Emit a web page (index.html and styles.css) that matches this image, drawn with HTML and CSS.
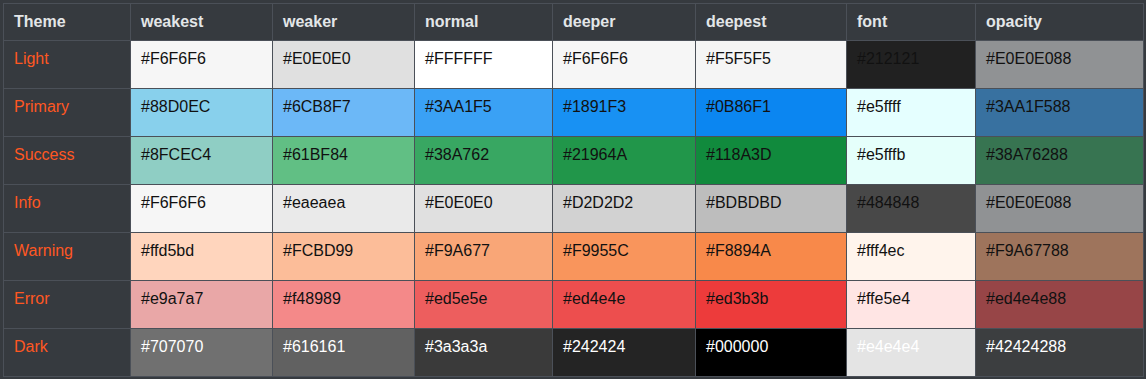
FILE: index.html
```html
<!DOCTYPE html>
<html>
<head>
<meta charset="utf-8">
<link rel="stylesheet" href="styles.css">
</head>
<body>
<div class="wrap">
<table class="palette">
  <colgroup>
    <col class="c-theme"><col class="c-weakest"><col class="c-weaker"><col class="c-normal"><col class="c-deeper"><col class="c-deepest"><col class="c-font"><col class="c-opacity">
  </colgroup>
  <thead>
    <tr><th>Theme</th><th>weakest</th><th>weaker</th><th>normal</th><th>deeper</th><th>deepest</th><th>font</th><th>opacity</th></tr>
  </thead>
  <tbody>
    <tr>
      <td class="name">Light</td>
      <td style="background:#F6F6F6">#F6F6F6</td>
      <td style="background:#E0E0E0">#E0E0E0</td>
      <td style="background:#FFFFFF">#FFFFFF</td>
      <td style="background:#F6F6F6">#F6F6F6</td>
      <td style="background:#F5F5F5">#F5F5F5</td>
      <td style="background:#212121">#212121</td>
      <td style="background:#E0E0E088">#E0E0E088</td>
    </tr>
    <tr>
      <td class="name">Primary</td>
      <td style="background:#88D0EC">#88D0EC</td>
      <td style="background:#6CB8F7">#6CB8F7</td>
      <td style="background:#3AA1F5">#3AA1F5</td>
      <td style="background:#1891F3">#1891F3</td>
      <td style="background:#0B86F1">#0B86F1</td>
      <td style="background:#e5ffff">#e5ffff</td>
      <td style="background:#3AA1F588">#3AA1F588</td>
    </tr>
    <tr>
      <td class="name">Success</td>
      <td style="background:#8FCEC4">#8FCEC4</td>
      <td style="background:#61BF84">#61BF84</td>
      <td style="background:#38A762">#38A762</td>
      <td style="background:#21964A">#21964A</td>
      <td style="background:#118A3D">#118A3D</td>
      <td style="background:#e5fffb">#e5fffb</td>
      <td style="background:#38A76288">#38A76288</td>
    </tr>
    <tr>
      <td class="name">Info</td>
      <td style="background:#F6F6F6">#F6F6F6</td>
      <td style="background:#eaeaea">#eaeaea</td>
      <td style="background:#E0E0E0">#E0E0E0</td>
      <td style="background:#D2D2D2">#D2D2D2</td>
      <td style="background:#BDBDBD">#BDBDBD</td>
      <td style="background:#484848">#484848</td>
      <td style="background:#E0E0E088">#E0E0E088</td>
    </tr>
    <tr>
      <td class="name">Warning</td>
      <td style="background:#ffd5bd">#ffd5bd</td>
      <td style="background:#FCBD99">#FCBD99</td>
      <td style="background:#F9A677">#F9A677</td>
      <td style="background:#F9955C">#F9955C</td>
      <td style="background:#F8894A">#F8894A</td>
      <td style="background:#fff4ec">#fff4ec</td>
      <td style="background:#F9A67788">#F9A67788</td>
    </tr>
    <tr>
      <td class="name">Error</td>
      <td style="background:#e9a7a7">#e9a7a7</td>
      <td style="background:#f48989">#f48989</td>
      <td style="background:#ed5e5e">#ed5e5e</td>
      <td style="background:#ed4e4e">#ed4e4e</td>
      <td style="background:#ed3b3b">#ed3b3b</td>
      <td style="background:#ffe5e4">#ffe5e4</td>
      <td style="background:#ed4e4e88">#ed4e4e88</td>
    </tr>
    <tr class="dark">
      <td class="name">Dark</td>
      <td style="background:#707070">#707070</td>
      <td style="background:#616161">#616161</td>
      <td style="background:#3a3a3a">#3a3a3a</td>
      <td style="background:#242424">#242424</td>
      <td style="background:#000000">#000000</td>
      <td style="background:#e4e4e4">#e4e4e4</td>
      <td style="background:#42424288">#42424288</td>
    </tr>
  </tbody>
</table>
</div>
</body>
</html>
```

FILE: styles.css
```css
html, body {
  margin: 0;
  padding: 0;
  background: #363a3f;
}

.wrap {
  padding: 3px;
}

.palette {
  border-collapse: collapse;
  table-layout: fixed;
  width: 1141px;
  font-family: "Liberation Sans", Arial, sans-serif;
  font-size: 16px;
  line-height: 18px;
  background: #363a3f;
}

.c-theme { width: 127px; }
.c-weakest { width: 142px; }
.c-weaker { width: 142px; }
.c-normal { width: 138px; }
.c-deeper { width: 143px; }
.c-deepest { width: 151px; }
.c-font { width: 129px; }
.c-opacity { width: 168px; }

.palette th,
.palette td {
  border: 1px solid #4b5058;
  text-align: left;
  vertical-align: top;
  white-space: nowrap;
  overflow: hidden;
}

.palette th {
  padding: 9px 10px 9px;
  color: #e3e6e8;
  font-weight: bold;
}

.palette td {
  padding: 9px 10px 20px;
  color: #111111;
}

.palette td.name {
  color: #ff5722;
}

.palette tr.dark td {
  color: #ffffff;
}

.palette tr.dark td.name {
  color: #ff5722;
}
```
